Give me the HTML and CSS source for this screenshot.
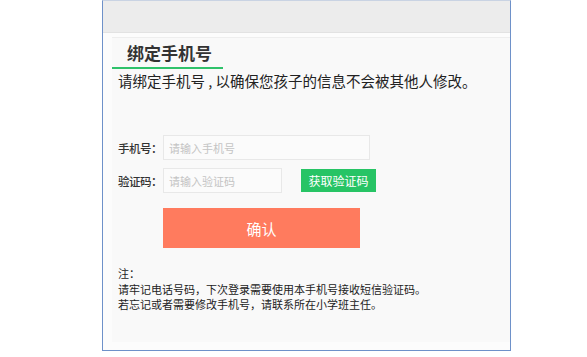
FILE: index.html
```html
<!DOCTYPE html>
<html lang="zh-CN">
<head>
  <meta charset="UTF-8" />
  <title>绑定手机号</title>
  <link rel="stylesheet" href="styles.css">
</head>
<body>
  <div class="frame">
    <div class="topbar"></div>
    <div class="panel">
      <div class="tab-head">
        <h2 class="tab-title">绑定手机号</h2>
      </div>
      <p class="intro">请绑定手机号 , 以确保您孩子的信息不会被其他人修改。</p>

      <form class="bind-form">
        <div class="row">
          <label for="phone">手机号：</label>
          <input id="phone" class="field field-long" placeholder="请输入手机号"/>
        </div>
        <div class="row">
          <label for="code">验证码：</label>
          <input id="code" class="field field-short" placeholder="请输入验证码"/>
          <button type="button" class="btn-code">获取验证码</button>
        </div>
        <button type="button" class="btn-ok">确认</button>
      </form>

      <div class="notes">
        <p>注：</p>
        <p>请牢记电话号码，下次登录需要使用本手机号接收短信验证码。</p>
        <p>若忘记或者需要修改手机号，请联系所在小学班主任。</p>
      </div>
    </div>
  </div>
</body>
</html>
```

FILE: styles.css
```css
* { box-sizing: border-box; margin:0; padding:0; }
body {
  background:#fff;
  font-family:"Noto Sans CJK SC", "Liberation Sans", sans-serif;
  color:#333;
}
.frame {
  margin-left:102px;
  width:409px; height:351px;
  border:1px solid #6e91c9;
  border-top-color:#c9d3e3;
  background:#fcfcfc;
}
.topbar { height:32px; background:#ececec; border-bottom:1px solid #e2e2e2; }
.panel {
  margin:4px 0 0 9px;
  background:#f9f9f9;
  height:305px;
}
.tab-head { height:32px; border-top:1px solid #eeeeee; position:relative; }
.tab-title {
  font-size:17px; font-weight:bold; color:#333;
  line-height:29px; padding-left:15px;
  width:111px; height:31px;
  border-bottom:2px solid #2fc26b;
}
.intro { font-size:14.5px; line-height:20px; margin:2px 0 0 6px; color:#222; }
.bind-form { margin:44px 0 0 6px; }
.row { display:flex; align-items:center; height:25px; margin-bottom:8px; }
.row label {
  flex:0 0 45px; width:45px; white-space:nowrap;
  font-size:11.5px; font-weight:500; color:#333; letter-spacing:-0.5px;
}
.field {
  flex:none;
  height:25px; border:1px solid #e8e8e8; background:#fbfbfb;
  font-size:11px; padding:0 5px; outline:none; color:#333;
  font-family:inherit;
}
.field::placeholder { color:#c4c4c4; }
.field-long { width:207px; }
.field-short { width:119px; }
.btn-code {
  flex:none;
  margin-left:19px; width:75px; height:23px;
  border:none; background:#27c465; color:#fff;
  font-size:12px; font-family:inherit;
}
.btn-ok {
  display:block; margin:15px 0 0 45px;
  width:197px; height:40px; border:none;
  background:#ff7b5e; color:#fff; font-size:15px; font-family:inherit;
}
.notes { margin:18px 0 0 6px; font-size:11px; line-height:15.5px; color:#222; }
```
